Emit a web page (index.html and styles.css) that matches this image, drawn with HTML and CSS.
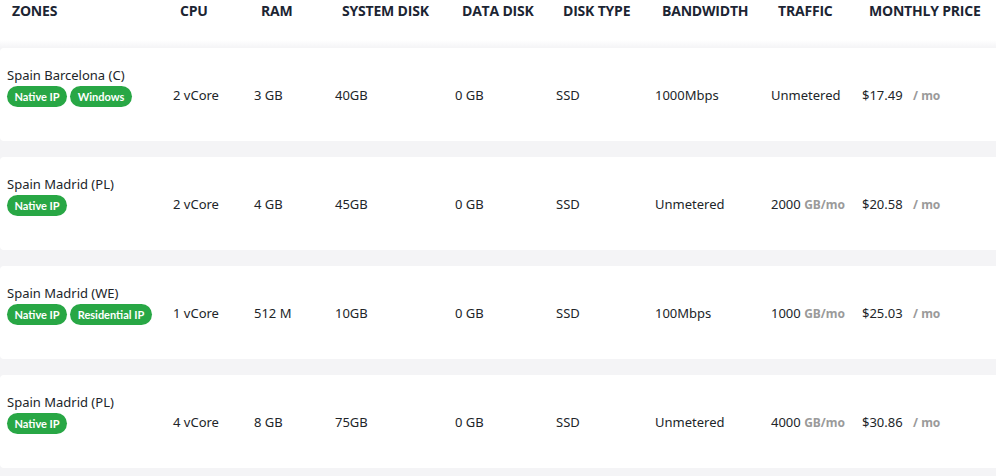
FILE: index.html
```html
<!DOCTYPE html>
<html lang="en">
<head>
<meta charset="utf-8">
<title>Spain VPS plans</title>
<link rel="stylesheet" href="styles.css">
</head>
<body>
<div class="plans">
  <div class="grid head">
    <div class="th first">Zones</div>
    <div class="th">CPU</div>
    <div class="th">RAM</div>
    <div class="th">System Disk</div>
    <div class="th">Data Disk</div>
    <div class="th">Disk Type</div>
    <div class="th">Bandwidth</div>
    <div class="th">Traffic</div>
    <div class="th">Monthly Price</div>
  </div>
  <div class="body">
    <div class="grid card">
      <div class="zone">
        <div class="name">Spain Barcelona (C)</div>
        <div class="tags"><span class="tag">Native IP</span><span class="tag">Windows</span></div>
      </div>
      <div class="td">2 vCore</div>
      <div class="td">3 GB</div>
      <div class="td">40GB</div>
      <div class="td">0 GB</div>
      <div class="td">SSD</div>
      <div class="td">1000Mbps</div>
      <div class="td">Unmetered</div>
      <div class="td">$17.49 <span class="unit mo">/ mo</span></div>
    </div>
    <div class="grid card">
      <div class="zone">
        <div class="name">Spain Madrid (PL)</div>
        <div class="tags"><span class="tag">Native IP</span></div>
      </div>
      <div class="td">2 vCore</div>
      <div class="td">4 GB</div>
      <div class="td">45GB</div>
      <div class="td">0 GB</div>
      <div class="td">SSD</div>
      <div class="td">Unmetered</div>
      <div class="td">2000 <span class="unit">GB/mo</span></div>
      <div class="td">$20.58 <span class="unit mo">/ mo</span></div>
    </div>
    <div class="grid card">
      <div class="zone">
        <div class="name">Spain Madrid (WE)</div>
        <div class="tags"><span class="tag">Native IP</span><span class="tag">Residential IP</span></div>
      </div>
      <div class="td">1 vCore</div>
      <div class="td">512 M</div>
      <div class="td">10GB</div>
      <div class="td">0 GB</div>
      <div class="td">SSD</div>
      <div class="td">100Mbps</div>
      <div class="td">1000 <span class="unit">GB/mo</span></div>
      <div class="td">$25.03 <span class="unit mo">/ mo</span></div>
    </div>
    <div class="grid card">
      <div class="zone">
        <div class="name">Spain Madrid (PL)</div>
        <div class="tags"><span class="tag">Native IP</span></div>
      </div>
      <div class="td">4 vCore</div>
      <div class="td">8 GB</div>
      <div class="td">75GB</div>
      <div class="td">0 GB</div>
      <div class="td">SSD</div>
      <div class="td">Unmetered</div>
      <div class="td">4000 <span class="unit">GB/mo</span></div>
      <div class="td">$30.86 <span class="unit mo">/ mo</span></div>
    </div>
  </div>
</div>
</body>
</html>
```

FILE: styles.css
```css
html, body {
  margin: 0;
  padding: 0;
  background: #ffffff;
  overflow: hidden;
}
body {
  font-family: "Noto Sans", "Open Sans", sans-serif;
  color: #212529;
}
.plans {
  width: 1020px;
}
.grid {
  display: grid;
  grid-template-columns: 166px 81px 81px 120px 101px 99px 116px 91px 1fr;
  padding-left: 7px;
}
.head {
  height: 21px;
  align-items: center;
  padding-bottom: 19px;
}
.th {
  font-family: "Open Sans", sans-serif;
  font-weight: 700;
  font-size: 14px;
  text-transform: uppercase;
  color: #1c2533;
  padding-left: 7px;
  white-space: nowrap;
  letter-spacing: -0.2px;
}
.th.first {
  padding-left: 5px;
}
.body {
  background: linear-gradient(#ffffff, #f4f4f6 8px);
  padding-top: 8px;
  display: flex;
  flex-direction: column;
  gap: 16px;
  padding-bottom: 20px;
}
.card {
  background: #ffffff;
  border-radius: 4px;
  padding-top: 17px;
  padding-bottom: 17px;
  align-items: center;
}
.zone {
  padding-bottom: 17px;
}
.name {
  font-size: 13px;
  line-height: 20px;
  white-space: nowrap;
}
.tags {
  display: flex;
  gap: 3px;
  margin-top: 1px;
}
.tag {
  background: #28a745;
  color: #ffffff;
  font-family: "Lato", sans-serif;
  font-weight: 700;
  font-size: 11px;
  line-height: 21px;
  height: 21px;
  padding: 0 7.5px;
  border-radius: 11px;
  white-space: nowrap;
}
.td {
  font-size: 13px;
  white-space: nowrap;
}
.unit {
  color: #9a9a9a;
  font-weight: 700;
  font-size: 12px;
}
.unit.mo {
  margin-left: 7px;
}
```
